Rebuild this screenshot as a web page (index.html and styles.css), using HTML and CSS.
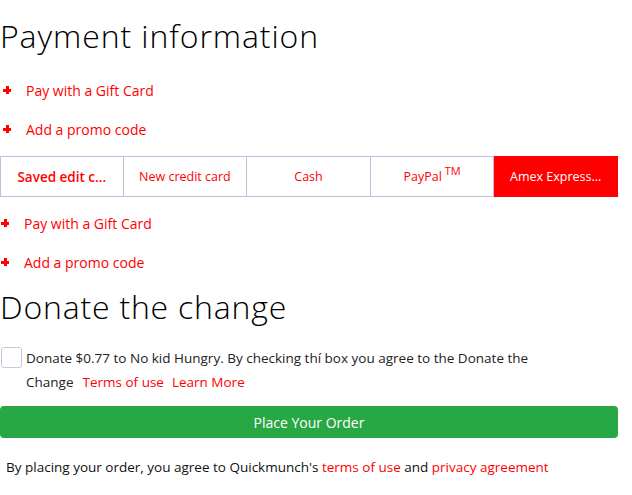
FILE: index.html
```html
<!DOCTYPE html>
<html>
<head>
<meta charset="utf-8">
<link rel="stylesheet" href="styles.css">
</head>
<body>
<div class="page">
  <h1 class="title">Payment information</h1>
  <div class="links">
    <a class="add-link"><span class="plus"></span><span>Pay with a Gift Card</span></a>
    <a class="add-link"><span class="plus"></span><span>Add a promo code</span></a>
  </div>
  <div class="tabs">
    <div class="tab tab-bold">Saved edit c...</div>
    <div class="tab">New credit card</div>
    <div class="tab">Cash</div>
    <div class="tab"><span>PayPal<sup>TM</sup></span></div>
    <div class="tab tab-active">Amex Express...</div>
  </div>
  <div class="links links-2">
    <a class="add-link"><span class="plus"></span><span>Pay with a Gift Card</span></a>
    <a class="add-link"><span class="plus"></span><span>Add a promo code</span></a>
  </div>
  <h2 class="title title-2">Donate the change</h2>
  <div class="donate">
    <span class="checkbox"></span>
    <div class="donate-text">
      <div class="donate-line">Donate $0.77 to No kid Hungry. By checking thí box you agree to the Donate the</div>
      <div class="donate-line donate-links"><span>Change</span><a class="red">Terms of use</a><a class="red">Learn More</a></div>
    </div>
  </div>
  <button class="order">Place Your Order</button>
  <p class="legal">By placing your order, you agree to Quickmunch's <a class="red-plain">terms of use</a> and <a class="red-plain">privacy agreement</a></p>
</div>
</body>
</html>
```
FILE: styles.css
```css
body {
  margin: 0;
  font-family: "Open Sans", "Noto Sans", sans-serif;
  color: #111;
  background: #fff;
}
.page {
  width: 618px;
}
.title {
  margin: 0;
  padding-top: 16px;
  font-size: 32px;
  font-weight: 300;
  letter-spacing: 0.9px;
  line-height: 40px;
  color: #000;
}
.links {
  display: flex;
  flex-direction: column;
  padding-top: 24px;
  gap: 19px;
}
.add-link {
  display: flex;
  align-items: center;
  gap: 15px;
  height: 20px;
  padding-left: 3px;
  color: #ff0000;
  font-size: 14px;
}
.links-2 .add-link {
  padding-left: 1px;
}
.plus {
  position: relative;
  width: 8px;
  height: 8px;
}
.plus::before, .plus::after {
  content: "";
  position: absolute;
  background: #ff0000;
}
.plus::before {
  left: 0; right: 0; top: 3px; height: 3px;
}
.plus::after {
  top: 0; bottom: 0; left: 3px; width: 3px;
}
.tabs {
  display: grid;
  grid-template-columns: repeat(5, 1fr);
  margin-top: 17px;
  height: 41px;
}
.tab {
  display: flex;
  align-items: center;
  justify-content: center;
  border: 1px solid #c3bedc;
  border-left: none;
  color: #ff0000;
  font-size: 12.5px;
}
.tab:first-child {
  border-left: 1px solid #c3bedc;
}
.tab sup {
  font-size: 11px;
  vertical-align: 6px;
  line-height: 0;
  margin-left: 3px;
}
.tab-bold {
  font-size: 13.5px;
  font-weight: 600;
}
.tab-active {
  background: #ff0000;
  color: #fff;
  border-color: #ff0000;
}
.links-2 {
  padding-top: 16px;
}
.title-2 {
  padding-top: 15px;
  letter-spacing: 0.8px;
}
.donate {
  display: flex;
  align-items: flex-start;
  gap: 4px;
  margin-top: 19px;
  padding-left: 1px;
}
.checkbox {
  flex: none;
  box-sizing: border-box;
  width: 21px;
  height: 21px;
  border: 1px solid #c9c4e0;
  border-radius: 3px;
  margin-top: 1px;
}
.donate-text {
  font-size: 13.5px;
  line-height: 24px;
  color: #222;
}
.donate-links {
  display: flex;
  gap: 9px;
}
.red {
  color: #ff0000;
}
.donate-links .red + .red {
  margin-left: -1px;
}
.order {
  display: block;
  width: 618px;
  height: 32px;
  margin-top: 12px;
  border: none;
  border-radius: 4px;
  background: #28a745;
  color: #fff;
  font-family: inherit;
  font-size: 14px;
}
.legal {
  margin: 20px 0 0;
  padding-left: 6px;
  font-size: 13.5px;
  color: #111;
}
.red-plain {
  color: #ff0000;
}
```
